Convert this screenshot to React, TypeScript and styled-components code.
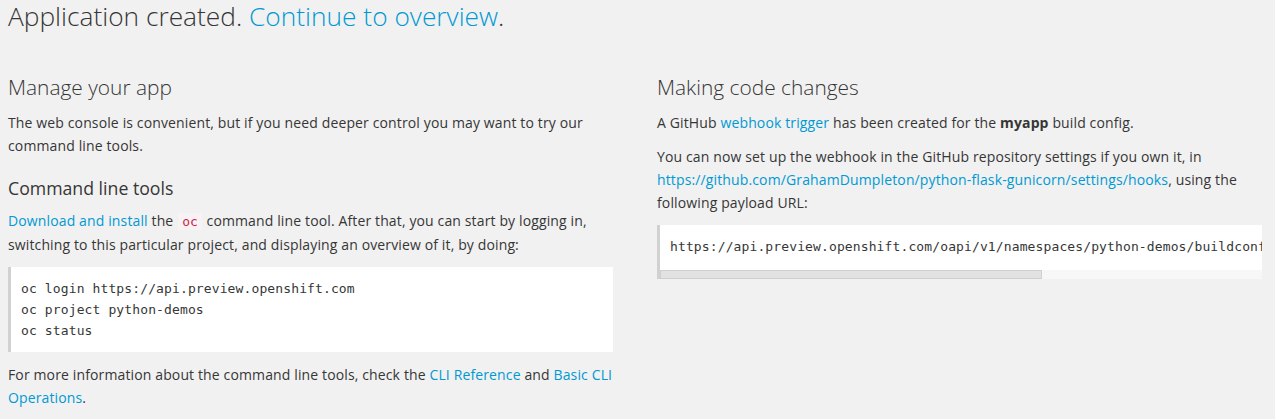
import React from "react";
import styled, { createGlobalStyle } from "styled-components";

const Global = createGlobalStyle`
  html, body { margin: 0; padding: 0; background: #f1f1f1; }
  body {
    font-family: "Open Sans", "Noto Sans", sans-serif;
    color: #363636;
    font-size: 14px;
    line-height: 23px;
    letter-spacing: 0.13px;
  }
`;

const Page = styled.div`
  padding: 0 8px;
  width: 1267px;
  box-sizing: border-box;
`;

const Title = styled.h1`
  margin: 0;
  font-size: 26.3px;
  line-height: 32px;
  font-weight: 300;
  letter-spacing: 0;
  color: #363636;
`;

const Columns = styled.div`
  display: grid;
  grid-template-columns: 605px 605px;
  column-gap: 44px;
  margin-top: 40px;
`;

const Column = styled.section`
  min-width: 0;
`;

const SectionTitle = styled.h2`
  margin: 0 0 9px;
  font-size: 20.9px;
  line-height: 30px;
  font-weight: 300;
  letter-spacing: 0;
  color: #363636;
`;

const SubTitle = styled.h3`
  margin: 19px 0 9px;
  font-size: 17.7px;
  line-height: 24px;
  font-weight: 400;
  letter-spacing: 0;
  color: #363636;
`;

const Para = styled.p`
  margin: 0 0 11px;
`;

const Link = styled.a`
  color: #0099d3;
  text-decoration: none;
`;

const Strong = styled.strong`
  font-weight: 700;
`;

const InlineCode = styled.code`
  font-family: "DejaVu Sans Mono", "Liberation Mono", monospace;
  font-size: 13px;
  letter-spacing: 0;
  color: #c7254e;
  background: #f9f2f4;
  padding: 1px 4px;
  margin: 0 1px;
`;

const Pre = styled.pre<{ $padBottom: number }>`
  margin: 0;
  padding: 11px 10px ${(p) => p.$padBottom}px;
  font-family: "DejaVu Sans Mono", "Liberation Mono", monospace;
  font-size: 13px;
  line-height: 21px;
  letter-spacing: 0.12px;
  color: #363636;
  white-space: pre;
  overflow: hidden;
`;

const CodeBox = styled.div`
  margin: 0 0 11px;
  background: #fff;
  border-left: 3px solid #d1d1d1;
  width: 605px;
  box-sizing: border-box;
`;

const ScrollTrack = styled.div`
  height: 9px;
  margin-bottom: 1px;
  background: #f7f7f7;
  display: flex;
`;

const ScrollThumb = styled.div<{ $width: number }>`
  width: ${(p) => p.$width}px;
  box-sizing: border-box;
  background: #e2e2e2;
  border: 1px solid #cfcfcf;
`;

export default function App() {
  return (
    <>
      <Global />
      <Page>
        <Title>
          Application created. <Link href="#">Continue to overview</Link>.
        </Title>
        <Columns>
          <Column>
            <SectionTitle>Manage your app</SectionTitle>
            <Para>
              The web console is convenient, but if you need deeper control you may want to try our
              command line tools.
            </Para>
            <SubTitle>Command line tools</SubTitle>
            <Para>
              <Link href="#">Download and install</Link> the <InlineCode>oc</InlineCode> command line
              tool. After that, you can start by logging in, switching to this particular project, and
              displaying an overview of it, by doing:
            </Para>
            <CodeBox>
              <Pre $padBottom={11}>
                {"oc login https://api.preview.openshift.com\noc project python-demos\noc status"}
              </Pre>
            </CodeBox>
            <Para>
              For more information about the command line tools, check the{" "}
              <Link href="#">CLI Reference</Link> and <Link href="#">Basic CLI Operations</Link>.
            </Para>
          </Column>
          <Column>
            <SectionTitle>Making code changes</SectionTitle>
            <Para>
              A GitHub <Link href="#">webhook trigger</Link> has been created for the{" "}
              <Strong>myapp</Strong> build config.
            </Para>
            <Para>
              You can now set up the webhook in the GitHub repository settings if you own it, in{" "}
              <Link href="#">https://github.com/GrahamDumpleton/python-flask-gunicorn/settings/hooks</Link>,
              using the following payload URL:
            </Para>
            <CodeBox>
              <Pre $padBottom={13}>
                {"https://api.preview.openshift.com/oapi/v1/namespaces/python-demos/buildconfigs/myapp/webhooks/a8f3c2e91b7d4e06/github"}
              </Pre>
              <ScrollTrack>
                <ScrollThumb $width={382} />
              </ScrollTrack>
            </CodeBox>
          </Column>
        </Columns>
      </Page>
    </>
  );
}
